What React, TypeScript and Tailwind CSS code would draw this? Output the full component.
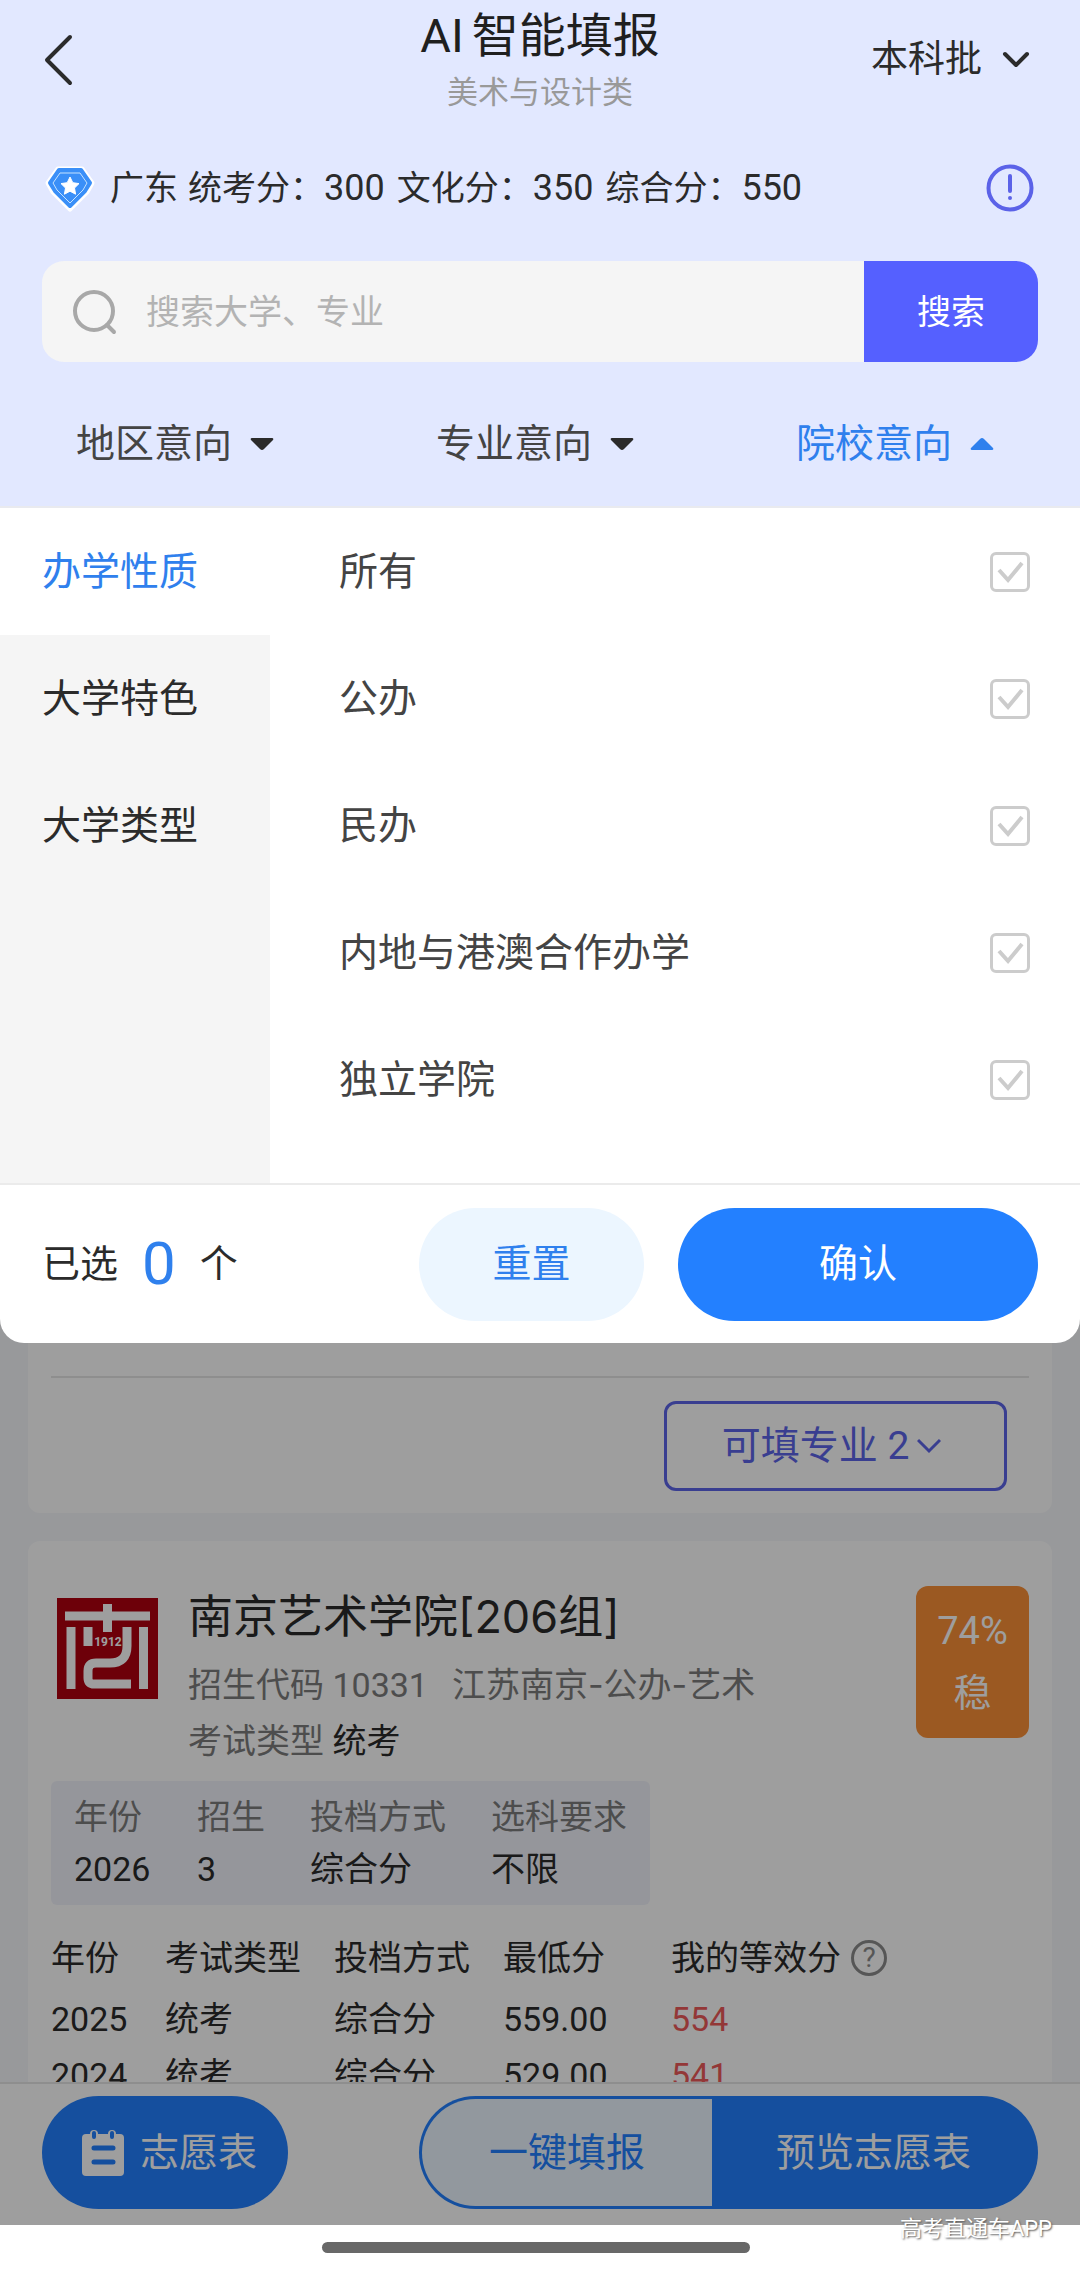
import React, { useState } from 'react';

const TABS = ['地区意向', '专业意向', '院校意向'];

const CATEGORIES = ['办学性质', '大学特色', '大学类型'];

const OPTIONS = ['所有', '公办', '民办', '内地与港澳合作办学', '独立学院'];

const SCORES = [
  { label: '统考分：', value: 300 },
  { label: '文化分：', value: 350 },
  { label: '综合分：', value: 550 },
];

const HISTORY = [
  { year: '2025', type: '统考', mode: '综合分', min: '559.00', mine: '554' },
  { year: '2024', type: '统考', mode: '综合分', min: '529.00', mine: '541' },
];

const MedalIcon = () => (
  <svg className="w-[50px] h-[50px] shrink-0" viewBox="0 0 50 50" strokeLinejoin="round">
    <path d="M13 6h24l10 14-5 9-17 17L8 29 3 20z" fill="#fff" stroke="#fff" strokeWidth="5" />
    <path d="M14 7h22l9 13-5 8-15 15-15-15-5-8z" fill="#3a8ff8" stroke="#3a8ff8" strokeWidth="4" />
    <path d="M15 10h20l7 10-4 7-13 13-13-13-4-7z" fill="none" stroke="#c4e2ff" strokeWidth="1" />
    <path d="m25 14 2.8 5.700 6.200.900-4.500 4.400 1.100 6.200-5.600-3-5.600 3 1.100-6.200-4.500-4.400 6.200-.900z" fill="#fff" stroke="#fff" strokeWidth="1" />
  </svg>
);

const SchoolLogo = () => (
  <svg className="w-[101px] h-[101px] shrink-0" viewBox="0 0 101 101">
    <rect width="101" height="101" fill="#b00010" />
    <g fill="none" stroke="#fff" strokeWidth="9">
      <path d="M8 18h85M50.500 6v28M14 29v62M86.500 29v62" />
      <path d="M31 29v19" />
      <path d="M70 29v19q0 17-17 17H39q-8 0-8 8v7q0 6 6 6h37" />
    </g>
    <text x="51" y="48" textAnchor="middle" fontSize="12" fontWeight="700" fill="#fff">1912</text>
  </svg>
);

const NotebookIcon = () => (
  <svg className="w-[42px] h-[48px]" viewBox="0 0 42 48">
    <rect y="5" width="42" height="42" rx="4" fill="#fff" />
    <g strokeWidth="8" strokeLinecap="round" stroke="#fff">
      <path d="M12 5v4M30 5v4" />
    </g>
    <path d="M12 4v4M30 4v4" stroke="#2380ff" strokeWidth="4" strokeLinecap="round" />
    <path d="M12 19h19M12 33h19" stroke="#2380ff" strokeWidth="5" strokeLinecap="round" />
  </svg>
);

const App: React.FC = () => {
  const [activeTab, setActiveTab] = useState(2);
  const [category, setCategory] = useState(0);
  const [selected, setSelected] = useState<string[]>([]);
  const [keyword, setKeyword] = useState('');

  const toggle = (name: string) => {
    setSelected(prev => (prev.includes(name) ? prev.filter(n => n !== name) : [...prev, name]));
  };

  return (
    <div className="h-screen flex flex-col overflow-hidden bg-white font-['Roboto','Noto_Sans_CJK_SC',sans-serif] text-[34px] leading-[48px] text-[#2b2b2b]">
      <header className="shrink-0 bg-[#e2e8ff] border-b-2 border-[#e9eaef]">
        <div className="grid grid-cols-3 items-center h-[120px] px-[42px]">
          <button aria-label="返回" className="justify-self-start">
            <svg className="w-8 h-[52px]" viewBox="0 0 32 52" fill="none" stroke="#2b2b2b" strokeWidth="4" strokeLinecap="round" strokeLinejoin="round">
              <path d="M28 3 5 26l23 23" />
            </svg>
          </button>
          <div className="text-center whitespace-nowrap">
            <h1 className="flex justify-center gap-2 text-[47px] leading-[66px] text-[#1f1f1f]">
              <span>AI</span>
              <span>智能填报</span>
            </h1>
            <p className="text-[31px] leading-[48px] text-[#999999]">美术与设计类</p>
          </div>
          <button className="justify-self-end flex items-center gap-5 pr-2 text-[37px]">
            本科批
            <svg className="w-7 h-5" viewBox="0 0 28 20" fill="none" stroke="#2b2b2b" strokeWidth="4" strokeLinecap="round" strokeLinejoin="round">
              <path d="m3 4 11 11L25 4" />
            </svg>
          </button>
        </div>

        <div className="flex items-center h-[141px] pb-1.5 pl-[45px] pr-[46px]">
          <MedalIcon />
          <div className="flex gap-[10px] ml-[15px] whitespace-nowrap">
            <span>广东</span>
            <div className="flex gap-3">
              {SCORES.map(s => (
                <span key={s.label}>{s.label}<span className="text-[36px]">{s.value}</span></span>
              ))}
            </div>
          </div>
          <button aria-label="提示" className="ml-auto">
            <svg className="w-12 h-12" viewBox="0 0 48 48" fill="none" stroke="#5b62e8" strokeWidth="4" strokeLinecap="round">
              <circle cx="24" cy="24" r="21.500" />
              <path d="M24 12v15M24 34v.1" />
            </svg>
          </button>
        </div>

        <div className="flex h-[101px] mx-[42px] rounded-[22px] overflow-hidden bg-[#f5f5f5]">
          <label className="flex flex-1 items-center gap-7 pl-[30px]">
            <svg className="w-[46px] h-[46px]" viewBox="0 0 46 46" fill="none" stroke="#a8a8a8" strokeWidth="4" strokeLinecap="round">
              <circle cx="22" cy="22" r="19" />
              <path d="m35 36 7 7" />
            </svg>
            <input
              type="text"
              placeholder="搜索大学、专业"
              className="flex-1 min-w-0 bg-transparent outline-none placeholder:text-[#b3b3b3]"
              value={keyword}
              onChange={(e) => setKeyword(e.target.value)}
            />
          </label>
          <button className="w-[174px] bg-[#5560ff] text-white">搜索</button>
        </div>

        <nav className="grid grid-cols-3 h-[144px] pt-5">
          {TABS.map((t, i) => (
            <button
              key={t}
              onClick={() => setActiveTab(i)}
              className={`flex items-center gap-[18px] pl-[76px] text-[39px] whitespace-nowrap ${i === activeTab ? 'text-[#2f80ed]' : 'text-[#444444]'}`}
            >
              {t}
              <svg className={`w-6 h-3 ${i === activeTab ? 'rotate-180 fill-[#2f80ed]' : 'fill-[#2b2b2b]'}`} viewBox="0 0 24 12">
                <path d="M2 0h20q2 0 1 2l-9 9q-2 2-4 0L1 2Q0 0 2 0z" />
              </svg>
            </button>
          ))}
        </nav>
      </header>

      <main className="relative flex-1 min-h-0 flex flex-col bg-[#f6f7fb]">
        {/* Panel de filtros */}
        <section className="relative z-10 shrink-0 bg-white rounded-b-[24px] overflow-hidden text-[39px]">
          <div className="flex border-b-2 border-[#ebebeb]">
            <div className="w-1/4 bg-[#f5f5f5]">
              {CATEGORIES.map((c, i) => (
                <button
                  key={c}
                  onClick={() => setCategory(i)}
                  className={`block w-full h-[127px] pl-[42px] text-left whitespace-nowrap ${i === category ? 'bg-white text-[#2f80ed]' : 'text-[#2b2b2b]'}`}
                >
                  {c}
                </button>
              ))}
            </div>
            <div className="flex-1 pl-[69px] pr-[50px] pb-10 text-[#444444]">
              {OPTIONS.map(o => (
                <label key={o} className="flex items-center justify-between h-[127px]">
                  {o}
                  <span className="relative w-10 h-10">
                    <input
                      type="checkbox"
                      className="peer block appearance-none w-10 h-10 rounded-[6px] border-[3px] border-[#cccccc] checked:border-[#2f80ed]"
                      checked={selected.includes(o)}
                      onChange={() => toggle(o)}
                    />
                    <svg className="absolute inset-0 pointer-events-none text-[#cccccc] peer-checked:text-[#2f80ed]" viewBox="0 0 40 40" fill="none" stroke="currentColor" strokeWidth="4">
                      <path d="m9 18 9 10 14-17" />
                    </svg>
                  </span>
                </label>
              ))}
            </div>
          </div>
          <div className="flex items-center h-[158px] px-[42px]">
            <p className="flex items-center text-[38px]">
              已选
              <span className="mx-6 text-[60px] text-[#2f80ed]">{selected.length}</span>
              个
            </p>
            <button onClick={() => setSelected([])} className="ml-auto w-[225px] h-[113px] rounded-full bg-[#ecf6ff] text-[#2f80ed]">重置</button>
            <button className="ml-[34px] w-[360px] h-[113px] rounded-full bg-[#2380ff] text-white">确认</button>
          </div>
        </section>

        {/* Resultados, debajo de la capa oscura */}
        <div className="flex-1 min-h-0 overflow-hidden px-7">
          <article className="bg-white rounded-b-[12px] px-[23px] pt-[33px] pb-[22px]">
            <div className="border-t-2 border-[#e6e6e6] pt-[23px] pr-[22px] flex justify-end">
              <button className="flex items-center justify-center gap-2 w-[343px] h-[90px] pr-2 rounded-[12px] border-[3px] border-[#5d65e9] text-[#5d65e9] text-[39px]">
                可填专业 2
                <svg className="w-6 h-4" viewBox="0 0 24 16" fill="none" stroke="currentColor" strokeWidth="3">
                  <path d="m1 2 11 11L23 2" />
                </svg>
              </button>
            </div>
          </article>

          <article className="mt-7 bg-white rounded-[12px] px-[23px] pt-[45px] pb-10 whitespace-nowrap">
            <div className="flex">
              <div className="pt-3 pl-[6px]"><SchoolLogo /></div>
              <div className="ml-[30px] text-[#7d7d7d]">
                <h2 className="font-['Inter','Noto_Sans_CJK_SC',sans-serif] text-[45px] leading-[62px] text-[#2b2b2b]">南京艺术学院[206组]</h2>
                <p className="mt-[13px]">招生代码 10331<span className="ml-6 font-['Inter','Noto_Sans_CJK_SC',sans-serif]">江苏南京-公办-艺术</span></p>
                <p className="mt-2">考试类型 <span className="text-[#2b2b2b]">统考</span></p>
              </div>
              <div className="ml-auto w-[113px] h-[152px] rounded-[12px] bg-[#fb9037] text-white text-[38px] leading-[62px] text-center pt-[14px]">
                <p>74%</p>
                <p>稳</p>
              </div>
            </div>

            <div className="w-fit mt-4 h-[124px] pt-[10px] px-[23px] rounded-[6px] bg-[#f1f3fb]">
              <table className="text-left leading-[52px]">
                <thead className="text-[#7d7d7d]">
                  <tr>
                    <th className="font-normal p-0 pr-[55px]">年份</th>
                    <th className="font-normal p-0 pr-[45px]">招生</th>
                    <th className="font-normal p-0 pr-[45px]">投档方式</th>
                    <th className="font-normal p-0">选科要求</th>
                  </tr>
                </thead>
                <tbody>
                  <tr>
                    <td>2026</td>
                    <td>3</td>
                    <td>综合分</td>
                    <td>不限</td>
                  </tr>
                </tbody>
              </table>
            </div>

            <table className="mt-5 text-left">
              <thead>
                <tr className="h-[66px]">
                  <th className="font-normal p-0 w-[114px]">年份</th>
                  <th className="font-normal p-0 w-[169px]">考试类型</th>
                  <th className="font-normal p-0 w-[169px]">投档方式</th>
                  <th className="font-normal p-0 w-[168px]">最低分</th>
                  <th className="font-normal p-0">
                    <span className="flex items-center gap-[10px]">
                      我的等效分
                      <button aria-label="说明" className="w-9 h-9 rounded-full border-[3px] border-[#8c8c8c] text-[#8c8c8c] text-[28px] leading-[30px]">?</button>
                    </span>
                  </th>
                </tr>
              </thead>
              <tbody>
                {HISTORY.map(h => (
                  <tr key={h.year} className="h-[56px]">
                    <td>{h.year}</td>
                    <td>{h.type}</td>
                    <td>{h.mode}</td>
                    <td>{h.min}</td>
                    <td className="text-[#ee5a5a]">{h.mine}</td>
                  </tr>
                ))}
              </tbody>
            </table>
          </article>
        </div>

        <footer className="shrink-0 flex items-start justify-between h-[143px] pt-3 px-[42px] bg-white border-t-2 border-[#e6e6e6] text-[39px]">
          <button className="flex items-center justify-end gap-4 w-[246px] h-[113px] pr-[31px] rounded-full bg-[#2380ff] text-white">
            <NotebookIcon />
            志愿表
          </button>
          <div className="flex w-[619px] h-[113px] rounded-full bg-[#2380ff] p-[3px]">
            <button className="w-[290px] rounded-l-full bg-[#ecf6ff] text-[#2380ff]">一键填报</button>
            <button className="flex-1 text-white">预览志愿表</button>
          </div>
        </footer>

        <div className="absolute inset-0 bg-black/38" />
      </main>

      <div className="relative shrink-0 flex justify-center h-[45px] pt-[17px] pr-2 bg-white">
        <div className="w-[428px] h-[11px] rounded-full bg-[#686868]" />
        <span className="absolute right-7 -top-3 text-[22px] leading-8 text-white [text-shadow:1px_1px_2px_#555]">高考直通车APP</span>
      </div>
    </div>
  );
};

export default App;
